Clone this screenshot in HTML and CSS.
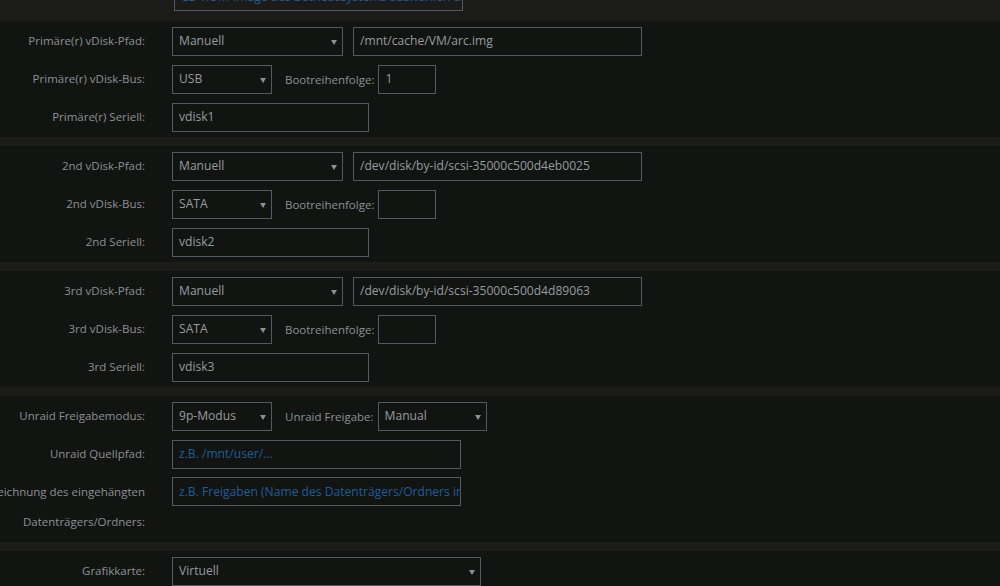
FILE: index.html
```html
<!DOCTYPE html>
<html lang="de">
<head>
<meta charset="utf-8">
<title>VM vDisk</title>
<link rel="stylesheet" href="styles.css">
</head>
<body>
<div class="page">
  <div class="top">
    <div class="field w289 top-box"><span class="ph">CD-ROM-Image des Betriebssystems auswählen und</span></div>
  </div>
  <div class="band"></div>

  <div class="section">
    <div class="row">
      <div class="label">Primäre(r) vDisk-Pfad:</div>
      <div class="ctrls">
        <div class="field select w171"><span>Manuell</span><i class="arrow"></i></div>
        <div class="field w289 gap10"><span>/mnt/cache/VM/arc.img</span></div>
      </div>
    </div>
    <div class="row">
      <div class="label">Primäre(r) vDisk-Bus:</div>
      <div class="ctrls">
        <div class="field select w100"><span>USB</span><i class="arrow"></i></div>
        <span class="inline-label">Bootreihenfolge:</span>
        <div class="field w58"><span>1</span></div>
      </div>
    </div>
    <div class="row">
      <div class="label">Primäre(r) Seriell:</div>
      <div class="ctrls">
        <div class="field w197"><span>vdisk1</span></div>
      </div>
    </div>
  </div>
  <div class="band"></div>

  <div class="section">
    <div class="row">
      <div class="label">2nd vDisk-Pfad:</div>
      <div class="ctrls">
        <div class="field select w171"><span>Manuell</span><i class="arrow"></i></div>
        <div class="field w289 gap10"><span>/dev/disk/by-id/scsi-35000c500d4eb0025</span></div>
      </div>
    </div>
    <div class="row">
      <div class="label">2nd vDisk-Bus:</div>
      <div class="ctrls">
        <div class="field select w100"><span>SATA</span><i class="arrow"></i></div>
        <span class="inline-label">Bootreihenfolge:</span>
        <div class="field w58"><span></span></div>
      </div>
    </div>
    <div class="row">
      <div class="label">2nd Seriell:</div>
      <div class="ctrls">
        <div class="field w197"><span>vdisk2</span></div>
      </div>
    </div>
  </div>
  <div class="band"></div>

  <div class="section">
    <div class="row">
      <div class="label">3rd vDisk-Pfad:</div>
      <div class="ctrls">
        <div class="field select w171"><span>Manuell</span><i class="arrow"></i></div>
        <div class="field w289 gap10"><span>/dev/disk/by-id/scsi-35000c500d4d89063</span></div>
      </div>
    </div>
    <div class="row">
      <div class="label">3rd vDisk-Bus:</div>
      <div class="ctrls">
        <div class="field select w100"><span>SATA</span><i class="arrow"></i></div>
        <span class="inline-label">Bootreihenfolge:</span>
        <div class="field w58"><span></span></div>
      </div>
    </div>
    <div class="row">
      <div class="label">3rd Seriell:</div>
      <div class="ctrls">
        <div class="field w197"><span>vdisk3</span></div>
      </div>
    </div>
  </div>
  <div class="band"></div>

  <div class="section">
    <div class="row">
      <div class="label">Unraid Freigabemodus:</div>
      <div class="ctrls">
        <div class="field select w100"><span>9p-Modus</span><i class="arrow"></i></div>
        <span class="inline-label">Unraid Freigabe:</span>
        <div class="field select w109"><span>Manual</span><i class="arrow"></i></div>
      </div>
    </div>
    <div class="row">
      <div class="label">Unraid Quellpfad:</div>
      <div class="ctrls">
        <div class="field w289"><span class="ph">z.B. /mnt/user/...</span></div>
      </div>
    </div>
    <div class="row multi">
      <div class="label">Bezeichnung des eingehängten Datenträgers/Ordners:</div>
      <div class="ctrls">
        <div class="field w289"><span class="ph">z.B. Freigaben (Name des Datenträgers/Ordners innerhalb der VM)</span></div>
      </div>
    </div>
  </div>
  <div class="band"></div>

  <div class="section">
    <div class="row">
      <div class="label">Grafikkarte:</div>
      <div class="ctrls">
        <div class="field select w309"><span>Virtuell</span><i class="arrow"></i></div>
      </div>
    </div>
  </div>
</div>
</body>
</html>
```

FILE: styles.css
```css
html, body {
  margin: 0;
  padding: 0;
  background: #121411;
  overflow: hidden;
}

body {
  font-family: "Open Sans", "Noto Sans", sans-serif;
  font-size: 11.5px;
  color: #8c9196;
  width: 1000px;
  height: 586px;
}

.page {
  display: flex;
  flex-direction: column;
}

.top {
  height: 12px;
  background: #1b1c1a;
  display: flex;
  align-items: flex-end;
  overflow: hidden;
  padding-left: 174px;
}

.top-box {
  flex: none;
  margin-bottom: 1px;
}

.band {
  height: 9px;
  background: #1b1c1a;
}

.section {
  padding: 1px 0;
}

.row {
  display: grid;
  grid-template-columns: 205px 1fr;
  margin-left: -33px;
  align-items: center;
  padding: 4px 0;
}

.row.multi {
  align-items: start;
}

.label {
  text-align: right;
  padding-right: 27px;
  line-height: 29px;
  padding-bottom: 1px;
}

.row.multi .label {
  line-height: 30px;
  padding-bottom: 0;
}

.ctrls {
  display: flex;
  align-items: center;
}

.field {
  box-sizing: border-box;
  height: 29px;
  border: 1px solid #525b64;
  display: flex;
  align-items: center;
  padding: 0 6px 1px;
  color: #979ca1;
  font-size: 12.1px;
  overflow: hidden;
  white-space: nowrap;
  position: relative;
  flex: none;
}

.field span {
  flex: none;
}

.ph {
  color: #1f5d98;
}

.select {
  padding-right: 18px;
}

.arrow {
  position: absolute;
  right: 5px;
  top: 12px;
  width: 0;
  height: 0;
  border-left: 3px solid transparent;
  border-right: 3px solid transparent;
  border-top: 5px solid #8c9196;
}

.gap10 { margin-left: 10px; }

.inline-label {
  margin-left: 13px;
  margin-right: 4px;
}

.w58 { width: 58px; }
.w100 { width: 100px; }
.w109 { width: 109px; }
.w171 { width: 171px; }
.w197 { width: 197px; }
.w289 { width: 289px; }
.w309 { width: 309px; }
```
